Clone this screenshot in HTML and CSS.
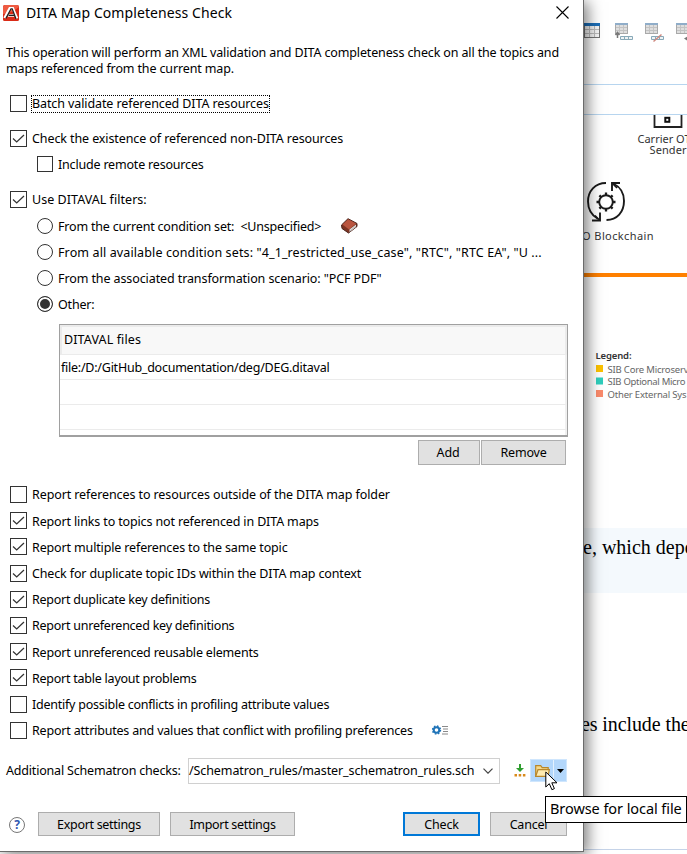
FILE: index.html
```html
<!DOCTYPE html>
<html lang="en">
<head>
<meta charset="utf-8">
<title>DITA Map Completeness Check</title>
<link rel="stylesheet" href="styles.css">
</head>
<body>
<svg class="defs" width="0" height="0">
  <symbol id="tick" viewBox="0 0 17 17"><path d="M3 8.500 6.700 12 14 5" fill="none" stroke="#333" stroke-width="1.250"/></symbol>
  <symbol id="grid" viewBox="0 0 16 15"><path d="M0 0h16v15H0z" fill="#757575"/><path d="M1 3h14v11H1z" fill="#f7f7f7"/><path d="M0 0h16v3H0z" fill="#1d6fb8"/><path d="M5.500 3v11M10.500 3v11M1 6.500h14M1 10.500h14" stroke="#bdbdbd"/></symbol>
  <symbol id="grid-off" viewBox="0 0 13 11"><path d="M0 0h13v11H0z" fill="#a9a9a9"/><path d="M1 2h11v8H1z" fill="#dedede"/><path d="M0 0h13v2H0z" fill="#8fadc9"/><path d="M4.500 2v8M8.500 2v8M1 4.500h11M1 7.500h11" stroke="#c3c3c3"/></symbol>
</svg>
<div class="screen">
  <main class="app">
    <div class="toolbar">
      <svg width="103" height="22" viewBox="0 0 103 22">
        <use href="#grid" x="0" y="0" width="16" height="15"/>
        <use href="#grid-off" x="31" y="0" width="13" height="11"/>
        <path d="M33.500 15v-4M31.500 12l2-2.500 2 2.500" stroke="#777" fill="none" stroke-width="1.500"/>
        <path d="M36.500 13.500h12v3h-12zM40.500 13.500v3M44.500 13.500v3" fill="#eef3f5" stroke="#88a9b8"/>
        <use href="#grid-off" x="61" y="0" width="13" height="11"/>
        <path d="M67.500 13.500h12v3h-12zM71.500 13.500v3M75.500 13.500v3" fill="#eef3f5" stroke="#88a9b8"/>
        <path d="M69.500 18.500 77.500 11.500" stroke="#d08a80" stroke-width="1.500"/>
        <use href="#grid-off" x="92" y="0" width="13" height="11"/>
        <path d="M100 15.500l4-2.500v5z" fill="#777"/>
      </svg>
    </div>
    <div class="ruler"></div>
    <svg class="diagram" width="104" height="413" viewBox="583 115 104 413">
      <path d="M583 134.500v9" stroke="#333" stroke-width="2"/>
      <path d="M654.500 115v12h27v-12" fill="none" stroke="#222" stroke-width="1.800"/>
      <rect x="665.300" y="117.800" width="4" height="4" fill="#fff" stroke="#111" stroke-width="2"/>
      <text x="637.500" y="142.500" class="cap" textLength="53">Carrier OT</text>
      <text x="649.500" y="153.500" class="cap" textLength="37">Sender</text>
      <g fill="none" stroke="#1a1a1a" stroke-width="1.900">
        <path d="M606 183c-11 0-18 8-18 18.500 0 8 4 14 10 17.500"/>
        <path d="M614 184c6 3 10 9 10 17 0 11-7 19-17.500 19"/>
        <path d="M620 183h-8v8M592 220.500h8v-8"/>
        <path d="M612 183l5 5M600 220.500l-5-5" stroke-width="1.500"/>
        <circle cx="606" cy="202" r="6.800"/>
        <path d="M606 195.500v-3M606 208.500v3M599.500 202h-3M612.500 202h3M601.400 197.400l-2-2M610.600 197.400l2-2M601.400 206.600l-2 2M610.600 206.600l2 2" stroke-width="2.300"/>
      </g>
      <text x="578" y="239.500" class="cap" textLength="75.500">IO Blockchain</text>
      <path d="M583 275h104" stroke="#ff8000" stroke-width="4"/>
      <text x="595.500" y="358.500" class="key key-title" textLength="36">Legend:</text>
      <rect x="596" y="365" width="7" height="7" fill="#fcc200"/>
      <rect x="596" y="377.500" width="7" height="7" fill="#2fcfbd"/>
      <rect x="596" y="390" width="7" height="7" fill="#fb8b6c"/>
      <text x="607.500" y="372.500" class="key" textLength="81">SIB Core Microserv</text>
      <text x="607.500" y="385" class="key" textLength="78">SIB Optional Micro</text>
      <text x="607.500" y="397.500" class="key" textLength="79">Other External Sys</text>
    </svg>
    <p class="note">e, which depe</p>
    <p class="para">es include the</p>
  </main>

  <section class="dialog">
    <header class="titlebar">
      <svg width="16" height="16" viewBox="0 0 16 16"><rect width="16" height="16" rx="1.500" fill="#d92b17"/><path d="M0 9Q9 8 16 2V1.500L14.500 0H1.500L0 1.500z" fill="#ee5b42"/><path d="M1.500 13 6.800 3.200h3L14 13.500M5 10.500h6" fill="none" stroke="#fff" stroke-width="2.600"/><path d="M2.800 13.500 8 3.800h1.200L13 14M5.500 10.300h6" fill="none" stroke="#222" stroke-width="1.300"/></svg>
      <h1>DITA Map Completeness Check</h1>
      <svg class="close" width="13" height="13" viewBox="0 0 13 13"><path d="M.5.5l12 12M12.500.5l-12 12" stroke="#000" stroke-width="1.100"/></svg>
    </header>
    <p class="intro">This operation will perform an XML validation and DITA completeness check on all the topics and<br>maps referenced from the current map.</p>

    <div class="group top">
      <label class="row focus"><i class="box"></i><span class="t fit-1">Batch validate referenced DITA resources</span></label>
      <label class="row gap"><i class="box"><svg><use href="#tick"/></svg></i><span class="t fit-1">Check the existence of referenced non-DITA resources</span></label>
      <label class="row sub"><i class="box"></i><span class="t fit-3">Include remote resources</span></label>
      <label class="row gap"><i class="box"><svg><use href="#tick"/></svg></i><span class="t wide-1">Use DITAVAL filters:</span></label>
      <label class="row sub"><i class="radio"></i><span class="t fit-3">From the current condition set:&nbsp; &lt;Unspecified&gt;</span>
        <svg class="book" width="17" height="16" viewBox="0 0 17 16"><path d="M.5 7 7 .7 16 5.500v3L7.500 15 1 10.500z" fill="#7d3323" stroke="#4b241b"/><path d="M1.500 6.500 7.200 1.200 15 5.500 8 11.500z" fill="#b9553f"/><path d="M8.500 11.500 15 6.500v2.500l-6.500 5z" fill="#e6e3df"/><path d="M9 12.800 15 8" stroke="#aaa" stroke-width=".7"/></svg></label>
      <label class="row sub"><i class="radio"></i><span class="t wide-2">From all available condition sets: "4_1_restricted_use_case", "RTC", "RTC EA", "U ...</span></label>
      <label class="row sub"><i class="radio"></i><span class="t fit-1">From the associated transformation scenario: "PCF PDF"</span></label>
      <label class="row sub"><i class="radio on"></i><span class="t fit-3">Other:</span></label>
    </div>

    <div class="table">
      <div class="th wide-2">DITAVAL files</div>
      <div class="td fit-4">file:/D:/GitHub_documentation/deg/DEG.ditaval</div>
      <div class="td"></div>
      <div class="td"></div>
      <div class="td rest"></div>
    </div>
    <div class="table-actions"><button class="add">Add</button><button class="remove">Remove</button></div>

    <div class="group reports">
      <label class="row"><i class="box"></i><span class="t fit-1">Report references to resources outside of the DITA map folder</span></label>
      <label class="row"><i class="box"><svg><use href="#tick"/></svg></i><span class="t fit-2">Report links to topics not referenced in DITA maps</span></label>
      <label class="row"><i class="box"><svg><use href="#tick"/></svg></i><span class="t fit-2">Report multiple references to the same topic</span></label>
      <label class="row"><i class="box"><svg><use href="#tick"/></svg></i><span class="t fit-2">Check for duplicate topic IDs within the DITA map context</span></label>
      <label class="row"><i class="box"><svg><use href="#tick"/></svg></i><span class="t fit-4">Report duplicate key definitions</span></label>
      <label class="row"><i class="box"><svg><use href="#tick"/></svg></i><span class="t fit-4">Report unreferenced key definitions</span></label>
      <label class="row"><i class="box"><svg><use href="#tick"/></svg></i><span class="t fit-3">Report unreferenced reusable elements</span></label>
      <label class="row"><i class="box"><svg><use href="#tick"/></svg></i><span class="t fit-4">Report table layout problems</span></label>
      <label class="row"><i class="box"></i><span class="t fit-4">Identify possible conflicts in profiling attribute values</span></label>
      <label class="row"><i class="box"></i><span class="t fit-3">Report attributes and values that conflict with profiling preferences</span>
        <svg class="prefs" width="16" height="10" viewBox="0 0 16 10"><circle cx="4.500" cy="5" r="2.800" fill="none" stroke="#2074b8" stroke-width="2"/><circle cx="4.500" cy="5" r="4" fill="none" stroke="#2074b8" stroke-width="1.400" stroke-dasharray="1.600 1.540"/><path d="M10 1.500h6M11 4h5M11 6.500h5M10 9h6" stroke="#8a8a8a"/></svg></label>
    </div>

    <div class="schematron">
      <span class="caption fit-3">Additional Schematron checks:</span>
      <div class="combo"><span class="fit-1">/Schematron_rules/master_schematron_rules.sch</span><svg width="10" height="6" viewBox="0 0 10 6"><path d="M.5.700 5 5.200 9.500.700" fill="none" stroke="#444" stroke-width="1.200"/></svg></div>
      <svg class="insert" width="12" height="13" viewBox="0 0 12 13"><path d="M5 0h2v4h3L6 8 2 4h3z" fill="#2f9e2f"/><path d="M.5 10h2.500v2.500H.5zM4.700 10h2.500v2.500H4.700zM8.900 10h2.500v2.500H8.900z" fill="#d98a1c"/></svg>
      <div class="browse"><span class="folder"><svg width="15" height="12" viewBox="0 0 15 12"><path d="M.7 11.300V.7h5l1.500 2h6v8.600z" fill="#f6d98b" stroke="#b8872b" stroke-width="1.200"/><path d="M.7 11.300 3 4.700h11.300l-1.200 6.600z" fill="#fdeab0" stroke="#b8872b" stroke-width="1.200"/></svg></span><span class="drop"><svg width="7" height="4" viewBox="0 0 7 4"><path d="M0 0h7L3.500 4z"/></svg></span></div>
    </div>

    <footer class="actions">
      <span class="help">?</span>
      <button class="export">Export settings</button>
      <button class="import">Import settings</button>
      <button class="check">Check</button>
      <button class="cancel">Cancel</button>
    </footer>
  </section>
  <div class="tooltip">Browse for local file</div>
  <svg class="cursor" width="13" height="20" viewBox="0 0 13 20"><path d="M.8 1v15l3.500-3.300 2.600 6 2.500-1.100-2.600-5.800H12z" fill="#fff" stroke="#000"/></svg>
</div>
</body>
</html>
```
FILE: styles.css
```css
* { box-sizing: border-box; }
body { margin: 0; background: #fff; color: #000; font: 12.5px/16px "Noto Sans", sans-serif; }
h1, p { margin: 0; font-weight: 400; }
svg { display: block; flex: none; }
.defs { position: absolute; }
.screen { position: relative; width: 687px; height: 854px; overflow: hidden; }

/* Tracking steps for the interface font */
.fit-1 { letter-spacing: -.1px; }
.fit-2 { letter-spacing: -.14px; }
.fit-3 { letter-spacing: -.19px; }
.fit-4 { letter-spacing: -.24px; }
.wide-1 { letter-spacing: .04px; }
.wide-2 { letter-spacing: .12px; }

/* Editor window behind the dialog */
.app { display: flex; flex-direction: column; height: 854px; padding-left: 583px; }
.toolbar { height: 85px; padding-top: 23px; padding-left: 1px; border-bottom: 1px solid #b7d5ef; overflow: hidden; flex: none; }
.ruler { height: 30px; border-bottom: 1px solid #b7d5ef; flex: none; }
.cap { font: 11px "Noto Sans", sans-serif; fill: #333; }
.key { font: 9.5px "Noto Sans", sans-serif; fill: #666; }
.key-title { font-weight: 600; fill: #333; }
.note, .para { font: 20px/24px "Liberation Serif", serif; white-space: nowrap; flex: none; }
.note { height: 65px; padding-top: 7px; background: #f4f9fd; }
.para { height: 257px; padding-top: 119px; border-bottom: 1px solid #c5d3e8; text-indent: -2px; letter-spacing: -.1px; }

/* Dialog */
.dialog { position: absolute; left: -1px; top: -1px; width: 585px; height: 853px; background: #fff; border: 1px solid #6b6b6b; box-shadow: 4px 3px 14px rgba(0,0,0,.5); white-space: nowrap; }
.titlebar { display: flex; align-items: center; height: 25px; padding-left: 3px; padding-right: 14px; }
.titlebar h1 { margin-left: 7px; font-size: 14px; line-height: 20px; letter-spacing: .08px; }
.close { margin-left: auto; }
.intro { padding: 20px 0 0 6px; height: 65px; letter-spacing: -.135px; }
.row { display: flex; align-items: center; height: 26.2px; padding-left: 10px; }
.row.gap { margin-top: 9px; }
.row.sub { padding-left: 37px; }
.row .t { margin-left: 5px; margin-top: 1.6px; }
.box { width: 17px; height: 17px; border: 1px solid #333; flex: none; }
.sub .box { width: 16px; height: 16px; }
.box svg { width: 17px; height: 17px; margin: -1px; }
.radio { width: 16px; height: 16px; border: 1px solid #333; border-radius: 50%; flex: none; }
.radio.on { background: #333; box-shadow: inset 0 0 0 2px #fff; }
.focus .t { outline: 1px dotted #000; }
.book { margin: 1px 0 0 20px; }
.table { margin: 6px 0 0 59px; width: 509px; height: 113px; border: 1px solid #a0a0a0; border-bottom-width: 2px; display: flex; flex-direction: column; }
.th { height: 30px; padding: 5px 0 0 2px; background: #f8f8f8; border: solid #ebebeb; border-width: 2px 2px 1px; flex: none; }
.td { height: 25px; padding-top: 5px; padding-left: 1px; border-bottom: 1px solid #ebebeb; border-right: 2px solid #f0f0f0; flex: none; }
.td.rest { height: 5px; border-bottom: 0; padding: 0; }
button { display: flex; align-items: center; justify-content: center; padding: 1px 2px 0 0; height: 25px; border: 1px solid #adadad; background: #e1e1e1; font: inherit; letter-spacing: -.2px; color: #000; }
.table-actions { display: flex; justify-content: flex-end; gap: 1px; margin: 3px 17px 0 0; }
.add { width: 62px; }
.remove { width: 85px; padding-right: 0; }
.reports { margin-top: 17px; }
.prefs { margin-left: 19px; }
.schematron { display: flex; align-items: center; height: 27px; margin-top: 14px; padding-left: 6px; }
.caption { width: 175px; }
.combo { display: flex; align-items: center; justify-content: space-between; width: 312px; height: 26px; margin-left: 7px; padding-right: 6px; border: 1px solid #d0d0d0; }
.insert { margin-left: 14px; }
.browse { display: flex; width: 37px; height: 23px; margin-left: 4px; background: #b3d7fb; border: 1px solid #cfe6fd; }
.folder { display: flex; align-items: center; justify-content: center; width: 22px; }
.drop { display: flex; align-items: center; justify-content: center; flex: 1; border-left: 1px solid #e3f1fe; }
.actions { display: flex; align-items: center; margin-top: 28px; padding-left: 9px; }
.actions button { height: 24px; padding: 2px 0 0; }
.help { width: 16px; height: 16px; margin-top: 1px; border: 1px solid #777; border-radius: 50%; color: #2f58b0; font: bold 12px/14px "Noto Sans", sans-serif; text-align: center; }
.actions .export, .actions .import { letter-spacing: -.31px; }
.export { width: 122px; margin-left: 13px; }
.import { width: 125px; margin-left: 10px; }
.check { width: 77px; margin-left: 108px; }
.actions .check { border: 2px solid #0078d7; }
.cancel { width: 77px; margin-left: 10px; }

.tooltip { position: absolute; left: 545px; top: 796px; width: 142px; height: 27px; padding-left: 4px; background: #fff; border: 1px solid #000; font-size: 14.5px; line-height: 23px; letter-spacing: -.07px; white-space: nowrap; }
.cursor { position: absolute; left: 545px; top: 771px; }
```
